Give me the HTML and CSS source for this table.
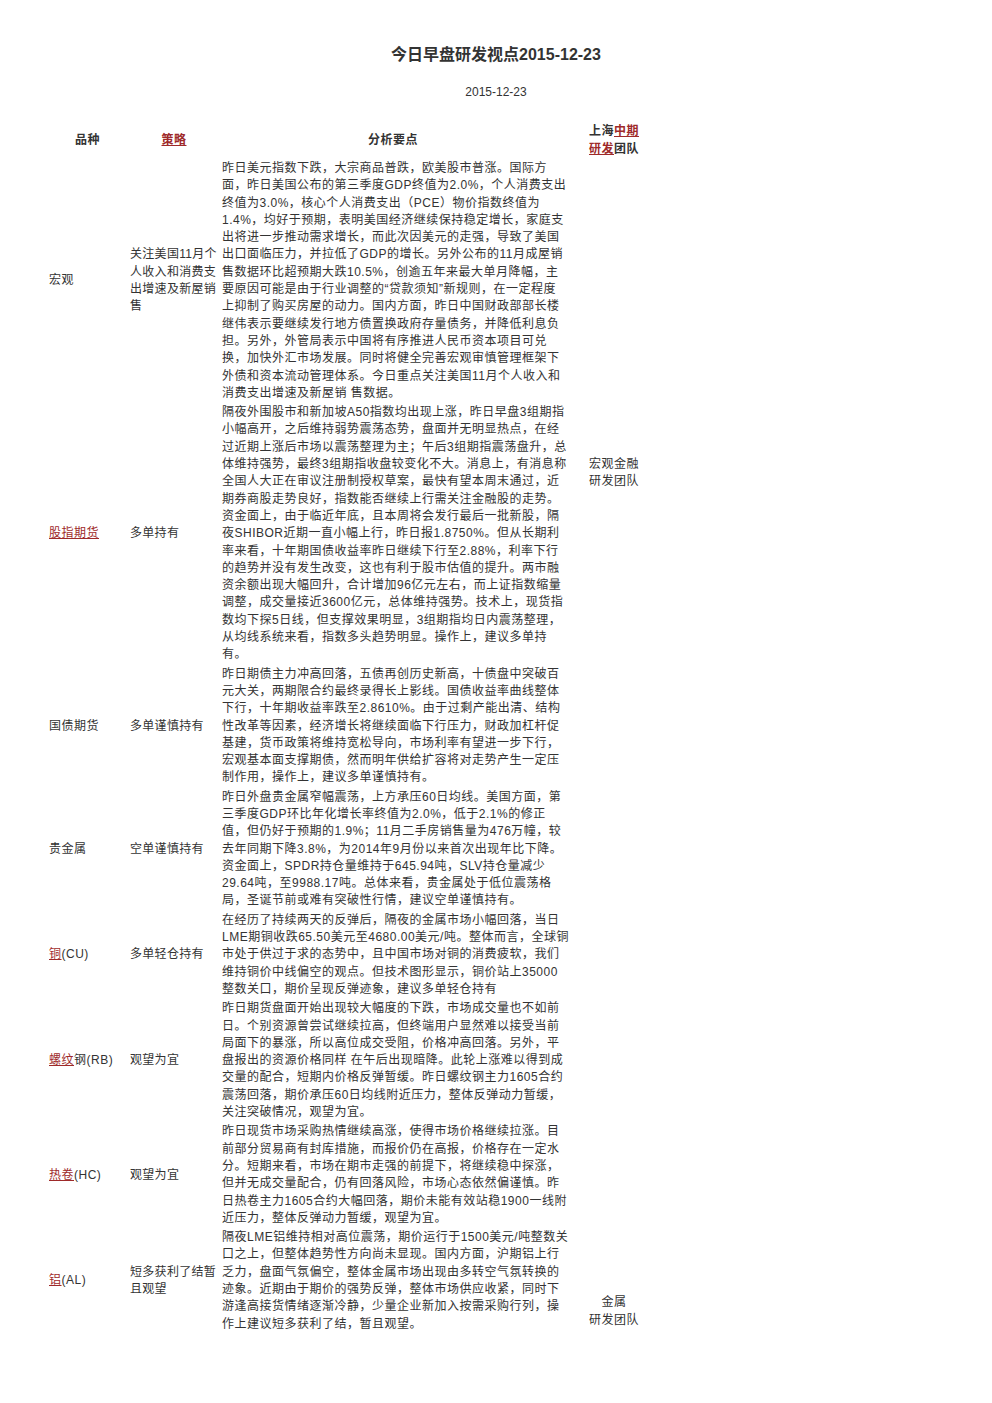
FILE: index.html
```html
<!DOCTYPE html>
<html lang="zh-CN">
<head>
<meta charset="utf-8">
<title>今日早盘研发视点2015-12-23</title>
<link rel="stylesheet" href="styles.css">
</head>
<body>
<div class="page">
  <h1 class="title">今日早盘研发视点2015-12-23</h1>
  <div class="date">2015-12-23</div>
  <table class="report">
    <colgroup>
      <col class="c-kind">
      <col class="c-strat">
      <col class="c-text">
      <col class="c-team">
    </colgroup>
    <thead>
      <tr>
        <th>品种</th>
        <th><a href="#">策略</a></th>
        <th>分析要点</th>
        <th>上海<a href="#">中期</a><br><a href="#">研发</a>团队</th>
      </tr>
    </thead>
    <tbody>
      <tr>
        <td class="kind">宏观</td>
        <td class="strat">关注美国11月个<br>人收入和消费支<br>出增速及新屋销<br>售</td>
        <td class="text">昨日美元指数下跌，大宗商品普跌，欧美股市普涨。国际方<br>面，昨日美国公布的第三季度GDP终值为2.0%，个人消费支出<br>终值为3.0%，核心个人消费支出（PCE）物价指数终值为<br>1.4%，均好于预期，表明美国经济继续保持稳定增长，家庭支<br>出将进一步推动需求增长，而此次因美元的走强，导致了美国<br>出口面临压力，并拉低了GDP的增长。另外公布的11月成屋销<br>售数据环比超预期大跌10.5%，创逾五年来最大单月降幅，主<br>要原因可能是由于行业调整的“贷款须知”新规则，在一定程度<br>上抑制了购买房屋的动力。国内方面，昨日中国财政部部长楼<br>继伟表示要继续发行地方债置换政府存量债务，并降低利息负<br>担。另外，外管局表示中国将有序推进人民币资本项目可兑<br>换，加快外汇市场发展。同时将健全完善宏观审慎管理框架下<br>外债和资本流动管理体系。今日重点关注美国11月个人收入和<br>消费支出增速及新屋销 售数据。</td>
        <td class="team" rowspan="3">宏观金融<br>研发团队</td>
      </tr>
      <tr>
        <td class="kind"><a href="#">股指期货</a></td>
        <td class="strat">多单持有</td>
        <td class="text">隔夜外围股市和新加坡A50指数均出现上涨，昨日早盘3组期指<br>小幅高开，之后维持弱势震荡态势，盘面并无明显热点，在经<br>过近期上涨后市场以震荡整理为主；午后3组期指震荡盘升，总<br>体维持强势，最终3组期指收盘较变化不大。消息上，有消息称<br>全国人大正在审议注册制授权草案，最快有望本周末通过，近<br>期券商股走势良好，指数能否继续上行需关注金融股的走势。<br>资金面上，由于临近年底，且本周将会发行最后一批新股，隔<br>夜SHIBOR近期一直小幅上行，昨日报1.8750%。但从长期利<br>率来看，十年期国债收益率昨日继续下行至2.88%，利率下行<br>的趋势并没有发生改变，这也有利于股市估值的提升。两市融<br>资余额出现大幅回升，合计增加96亿元左右，而上证指数缩量<br>调整，成交量接近3600亿元，总体维持强势。技术上，现货指<br>数均下探5日线，但支撑效果明显，3组期指均日内震荡整理，<br>从均线系统来看，指数多头趋势明显。操作上，建议多单持<br>有。</td>
      </tr>
      <tr>
        <td class="kind">国债期货</td>
        <td class="strat">多单谨慎持有</td>
        <td class="text">昨日期债主力冲高回落，五债再创历史新高，十债盘中突破百<br>元大关，两期限合约最终录得长上影线。国债收益率曲线整体<br>下行，十年期收益率跌至2.8610%。由于过剩产能出清、结构<br>性改革等因素，经济增长将继续面临下行压力，财政加杠杆促<br>基建，货币政策将维持宽松导向，市场利率有望进一步下行，<br>宏观基本面支撑期债，然而明年供给扩容将对走势产生一定压<br>制作用，操作上，建议多单谨慎持有。</td>
      </tr>
      <tr>
        <td class="kind">贵金属</td>
        <td class="strat">空单谨慎持有</td>
        <td class="text">昨日外盘贵金属窄幅震荡，上方承压60日均线。美国方面，第<br>三季度GDP环比年化增长率终值为2.0%，低于2.1%的修正<br>值，但仍好于预期的1.9%；11月二手房销售量为476万幢，较<br>去年同期下降3.8%，为2014年9月份以来首次出现年比下降。<br>资金面上，SPDR持仓量维持于645.94吨，SLV持仓量减少<br>29.64吨，至9988.17吨。总体来看，贵金属处于低位震荡格<br>局，圣诞节前或难有突破性行情，建议空单谨慎持有。</td>
        <td class="team team-bottom" rowspan="5">金属<br>研发团队</td>
      </tr>
      <tr>
        <td class="kind"><a href="#">铜</a>(CU)</td>
        <td class="strat">多单轻仓持有</td>
        <td class="text">在经历了持续两天的反弹后，隔夜的金属市场小幅回落，当日<br>LME期铜收跌65.50美元至4680.00美元/吨。整体而言，全球铜<br>市处于供过于求的态势中，且中国市场对铜的消费疲软，我们<br>维持铜价中线偏空的观点。但技术图形显示，铜价站上35000<br>整数关口，期价呈现反弹迹象，建议多单轻仓持有</td>
      </tr>
      <tr>
        <td class="kind"><a href="#">螺纹</a>钢(RB)</td>
        <td class="strat">观望为宜</td>
        <td class="text">昨日期货盘面开始出现较大幅度的下跌，市场成交量也不如前<br>日。个别资源曾尝试继续拉高，但终端用户显然难以接受当前<br>局面下的暴涨，所以高位成交受阻，价格冲高回落。另外，平<br>盘报出的资源价格同样 在午后出现暗降。此轮上涨难以得到成<br>交量的配合，短期内价格反弹暂缓。昨日螺纹钢主力1605合约<br>震荡回落，期价承压60日均线附近压力，整体反弹动力暂缓，<br>关注突破情况，观望为宜。</td>
      </tr>
      <tr>
        <td class="kind"><a href="#">热卷</a>(HC)</td>
        <td class="strat">观望为宜</td>
        <td class="text">昨日现货市场采购热情继续高涨，使得市场价格继续拉涨。目<br>前部分贸易商有封库措施，而报价仍在高报，价格存在一定水<br>分。短期来看，市场在期市走强的前提下，将继续稳中探涨，<br>但并无成交量配合，仍有回落风险，市场心态依然偏谨慎。昨<br>日热卷主力1605合约大幅回落，期价未能有效站稳1900一线附<br>近压力，整体反弹动力暂缓，观望为宜。</td>
      </tr>
      <tr>
        <td class="kind"><a href="#">铝</a>(AL)</td>
        <td class="strat">短多获利了结暂<br>且观望</td>
        <td class="text">隔夜LME铝维持相对高位震荡，期价运行于1500美元/吨整数关<br>口之上，但整体趋势性方向尚未显现。国内方面，沪期铝上行<br>乏力，盘面气氛偏空，整体金属市场出现由多转空气氛转换的<br>迹象。近期由于期价的强势反弹，整体市场供应收紧，同时下<br>游逢高接货情绪逐渐冷静，少量企业新加入按需采购行列，操<br>作上建议短多获利了结，暂且观望。</td>
      </tr>
    </tbody>
  </table>
</div>
</body>
</html>
```

FILE: styles.css
```css
html, body {
  margin: 0;
  padding: 0;
  background: #ffffff;
}

body {
  font-family: "Liberation Sans", "Noto Sans CJK SC", Arial, sans-serif;
  color: #333333;
}

.page {
  padding-top: 45px;
  padding-bottom: 40px;
}

.title {
  margin: 0;
  font-size: 16px;
  line-height: 20px;
  font-weight: bold;
  text-align: center;
  color: #333333;
}

.date {
  margin-top: 18px;
  font-size: 12px;
  line-height: 18px;
  text-align: center;
}

.report {
  margin: 20px 0 0 47px;
  border-collapse: collapse;
  table-layout: fixed;
  width: 615px;
  font-size: 12px;
  letter-spacing: 0.5px;
}

.c-kind { width: 81px; }
.c-strat { width: 92px; }
.c-text { width: 346px; }
.c-team { width: 96px; }

.report th,
.report td {
  padding: 1px 2px;
  line-height: 17.3px;
  vertical-align: middle;
  text-align: left;
}

.report th {
  text-align: center;
  font-weight: bold;
  line-height: 18px;
}

.report a {
  color: #9e2a2a;
  text-decoration: underline;
}

.report .text,
.report .strat,
.report .kind {
  white-space: nowrap;
}

.report .strat {
  letter-spacing: 0.3px;
}

.report .team {
  text-align: center;
}

.report .team-bottom {
  vertical-align: bottom;
  padding-bottom: 5px;
}
```
